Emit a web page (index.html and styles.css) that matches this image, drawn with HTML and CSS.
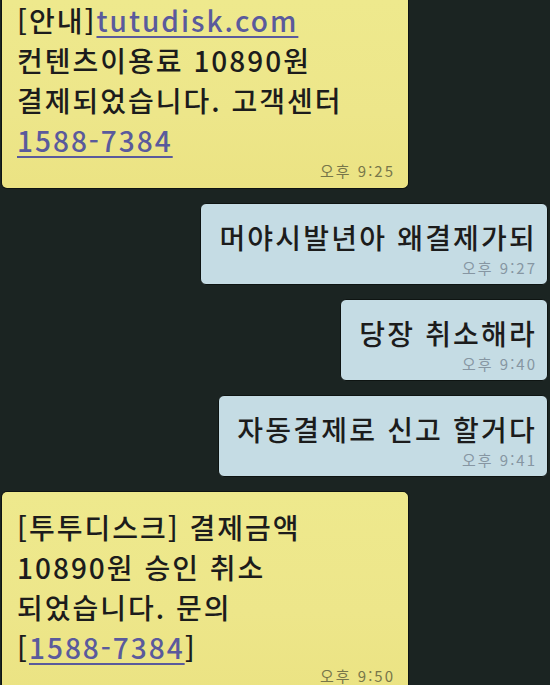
FILE: index.html
```html
<!DOCTYPE html>
<html lang="ko">
<head>
<meta charset="utf-8">
<title>SMS</title>
<link rel="stylesheet" href="styles.css">
</head>
<body>
<div class="chat">
  <div class="bubble recv first">
    <div class="msg">[안내]<span class="link">tutudisk.com</span><br>컨텐츠이용료 10890원<br>결제되었습니다. 고객센터<br><span class="link num">1588-7384</span></div>
    <div class="time">오후 9:25</div>
  </div>
  <div class="bubble sent">
    <div class="msg">머야시발년아 왜결제가되</div>
    <div class="time">오후 9:27</div>
  </div>
  <div class="bubble sent">
    <div class="msg">당장 취소해라</div>
    <div class="time">오후 9:40</div>
  </div>
  <div class="bubble sent">
    <div class="msg">자동결제로 신고 할거다</div>
    <div class="time">오후 9:41</div>
  </div>
  <div class="bubble recv last">
    <div class="msg">[투투디스크] 결제금액<br>10890원 승인 취소<br>되었습니다. 문의<br>[<span class="link num">1588-7384</span>]</div>
    <div class="time">오후 9:50</div>
  </div>
</div>
</body>
</html>
```

FILE: styles.css
```css
html, body {
  margin: 0;
  padding: 0;
  background: #1b2422;
  height: 100%;
  overflow: hidden;
}
.chat {
  display: flex;
  flex-direction: column;
  gap: 14px;
  font-family: "Noto Sans CJK KR", "Noto Sans", sans-serif;
  color: #1c1c1c;
}
.bubble {
  box-sizing: border-box;
  border: 1px solid #0e1412;
  border-radius: 6px;
}
.msg {
  font-size: 28px;
  line-height: 40px;
  font-weight: 500;
  letter-spacing: 2px;
  white-space: nowrap;
}
.time {
  font-size: 15px;
  line-height: 22px;
  letter-spacing: 2px;
  text-align: right;
}
.recv {
  align-self: flex-start;
  width: 408px;
  margin-left: 1px;
  background: linear-gradient(180deg, #eee98d 0%, #ede68a 60%, #ebe383 100%);
  padding: 0 13px 6px 15px;
}
.recv .time {
  color: #77764a;
}
.first {
  border-top: none;
  border-top-left-radius: 0;
  border-top-right-radius: 0;
}
.last {
  padding-top: 15px;
  border-bottom: none;
  border-bottom-left-radius: 0;
  border-bottom-right-radius: 0;
}
.last .time {
  line-height: 18px;
}
.sent {
  align-self: flex-end;
  margin-right: 2px;
  background: #c5dce4;
  padding: 13px 10px 5px 18px;
}
.sent .msg {
  letter-spacing: 2.2px;
}
.sent .time {
  color: #8696a2;
}
.link {
  color: #5a5a9c;
  text-decoration: underline;
  text-decoration-thickness: 2px;
  text-underline-offset: 4px;
  letter-spacing: 2px;
}
.num {
  letter-spacing: 2px;
}
```
